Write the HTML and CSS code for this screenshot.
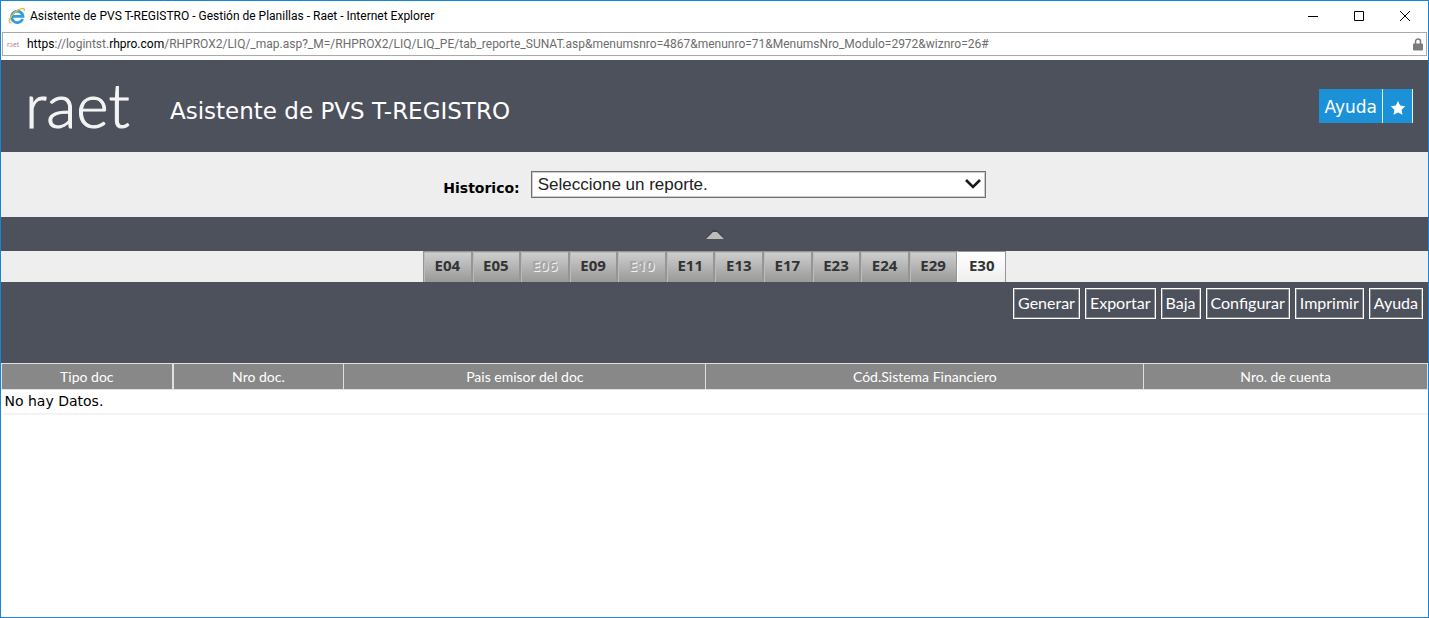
FILE: index.html
```html
<!DOCTYPE html>
<html lang="es">
<head>
<meta charset="utf-8">
<title>Asistente de PVS T-REGISTRO</title>
<link rel="stylesheet" href="styles.css">
</head>
<body>
<div class="window">
  <div class="titlebar">
    <svg class="ie-icon" viewBox="0 0 18 18" aria-hidden="true">
      <path d="M14.600 12A5.700 5.700 0 1 1 15 9.400H5" fill="none" stroke="#2f9fe0" stroke-width="2.800"/>
      <path d="M3.500 15.800C-.4 16.600 1.500 9.800 6.800 5.200 11.400 1.400 17.200-.2 16.400 4" fill="none" stroke="#f0b83c" stroke-width="1.400"/>
    </svg>
    <span class="window-title">Asistente de PVS T-REGISTRO - Gestión de Planillas - Raet - Internet Explorer</span>
    <div class="window-controls">
      <button type="button" class="window-button" aria-label="Minimizar"><svg viewBox="0 0 12 12"><path d="M1 6.500h10"/></svg></button>
      <button type="button" class="window-button" aria-label="Maximizar"><svg viewBox="0 0 12 12"><path d="M1.500 1.500h9v9h-9z"/></svg></button>
      <button type="button" class="window-button" aria-label="Cerrar"><svg viewBox="0 0 12 12"><path d="M1 1l10 10M11 1L1 11"/></svg></button>
    </div>
  </div>

  <div class="addressbar">
    <span class="favicon"><i>r</i><i>a</i><i>e</i><i>t</i></span>
    <span class="url"><b>https</b>://logintst.<b>rhpro.com</b>/RHPROX2/LIQ/_map.asp?_M=/RHPROX2/LIQ/LIQ_PE/tab_reporte_SUNAT.asp&amp;menumsnro=4867&amp;menunro=71&amp;MenumsNro_Modulo=2972&amp;wiznro=26#</span>
    <svg class="lock" viewBox="0 0 10 13" aria-hidden="true"><path d="M2.500 6V3.500a2.500 2.500 0 0 1 5 0V6" fill="none" stroke="#7b7b7b" stroke-width="1.500"/><rect y="5.500" width="10" height="7" rx="1" fill="#7b7b7b"/></svg>
  </div>

  <header class="header">
    <span class="logo">raet</span>
    <h1 class="page-title">Asistente de PVS T-REGISTRO</h1>
    <div class="header-actions">
      <button type="button" class="help-button">Ayuda</button>
      <button type="button" class="star-button" aria-label="Favorito"><svg viewBox="0 0 16 16"><path d="M8 1l2.200 4.600 5 .7-3.600 3.500.9 5L8 12.400l-4.500 2.400.9-5L.8 6.300l5-.7z" fill="#fff"/></svg></button>
    </div>
  </header>

  <div class="filter">
    <label class="filter-label" for="historico">Historico:</label>
    <div class="select-box">
      <select id="historico" class="select"><option>Seleccione un reporte.</option></select>
      <svg class="select-arrow" viewBox="0 0 16 10" aria-hidden="true"><path d="M1 1l7 7 7-7" fill="none" stroke="#1a1a1a" stroke-width="2.600"/></svg>
    </div>
  </div>

  <div class="collapse">
    <button type="button" class="collapse-button" aria-label="Contraer"><svg viewBox="0 0 20 10"><path d="M0 9L8 0h4l8 9z" fill="#3f434b"/><path d="M1 9l7-7h4l7 7z" fill="#bcbcbc"/></svg></button>
  </div>

  <nav class="tabs">
    <div class="tab-list">
      <button type="button" class="tab">E04</button>
      <button type="button" class="tab">E05</button>
      <button type="button" class="tab" disabled>E06</button>
      <button type="button" class="tab">E09</button>
      <button type="button" class="tab" disabled>E10</button>
      <button type="button" class="tab">E11</button>
      <button type="button" class="tab">E13</button>
      <button type="button" class="tab">E17</button>
      <button type="button" class="tab">E23</button>
      <button type="button" class="tab">E24</button>
      <button type="button" class="tab">E29</button>
      <button type="button" class="tab tab-active">E30</button>
    </div>
  </nav>

  <div class="toolbar">
    <button type="button" class="tool">Generar</button>
    <button type="button" class="tool">Exportar</button>
    <button type="button" class="tool">Baja</button>
    <button type="button" class="tool">Configurar</button>
    <button type="button" class="tool">Imprimir</button>
    <button type="button" class="tool">Ayuda</button>
  </div>

  <table class="grid">
    <colgroup><col class="col-tipo"><col class="col-nro"><col class="col-pais"><col class="col-sistema"><col class="col-cuenta"></colgroup>
    <thead><tr><th>Tipo doc</th><th>Nro doc.</th><th>Pais emisor del doc</th><th>Cód.Sistema Financiero</th><th>Nro. de cuenta</th></tr></thead>
    <tbody><tr><td colspan="5">No hay Datos.</td></tr></tbody>
  </table>
</div>
</body>
</html>
```
FILE: styles.css
```css
* { box-sizing: border-box; }
body { margin: 0; background: #fff; font-family: "DejaVu Sans", Verdana, sans-serif; }
button { margin: 0; padding: 0; border: 0; background: none; font: inherit; color: inherit; }
svg { display: block; }

.window { min-height: 100vh; border: 1px solid #1883d7; }

.titlebar { display: flex; align-items: center; height: 31px; padding: 0 0 2px 7px; }
.ie-icon { width: 18px; height: 18px; margin-right: 4px; }
.window-title { font: 12px/16px Roboto, "Segoe UI", sans-serif; color: #000; white-space: nowrap; }
.window-controls { display: flex; margin-left: auto; }
.window-button { display: grid; place-items: center; width: 46px; height: 28px; }
.window-button svg { width: 12px; height: 12px; fill: none; stroke: #000; stroke-width: 1; }

.addressbar { display: flex; align-items: center; height: 24px; margin: 0 1px 4px; padding: 0 3px 0 4px; border: 1px solid #aaa; }
.favicon { display: flex; width: 20px; font: 7px/10px Lato, sans-serif; color: #c97b86; }
.favicon i { font-style: normal; }
.favicon i:nth-child(2) { color: #d9a27a; }
.favicon i:nth-child(3) { color: #9b83bd; }
.url { font: 12px/16px Roboto, "Segoe UI", sans-serif; color: #6d6d6d; white-space: nowrap; }
.url b { font-weight: 400; color: #000; }
.lock { width: 10px; height: 13px; margin-left: auto; }

.header { display: flex; align-items: center; height: 92px; padding: 0 15px 0 24px; background: #4d515c; color: #fff; }
.logo { width: 145px; padding-bottom: 4px; font: 300 62px/62px Lato, sans-serif; color: #f4f4f5; -webkit-text-stroke: 1px #f4f4f5; }
.page-title { margin: 10px 0 0; font-size: 23px; line-height: 28px; font-weight: 400; }
.header-actions { display: flex; margin-left: auto; }
.help-button { height: 34px; padding: 2px 5px 0; background: #1b92d8; font-size: 17px; }
.star-button { display: grid; place-items: center; width: 31px; height: 34px; padding-top: 3px; border: solid #e4eef5; border-width: 0 1px; background: #1b92d8; }
.star-button svg { width: 16px; height: 16px; }

.filter { display: flex; justify-content: center; align-items: center; gap: 11px; height: 65px; background: #eee; }
.filter-label { padding-top: 6px; font-size: 14px; line-height: 20px; font-weight: 700; color: #000; }
.select-box { position: relative; width: 455px; }
.select { display: block; width: 100%; height: 27px; padding: 1px 30px 0 6px; border: 1px solid #707070; border-radius: 0; box-shadow: inset 0 0 0 1px #ccc; background: #fff; appearance: none; font: 17px/24px "Liberation Sans", Arial, sans-serif; color: #222; }
.select-arrow { position: absolute; right: 5px; top: 8px; width: 16px; height: 10px; }

.collapse { display: flex; justify-content: center; align-items: flex-end; height: 34px; padding-bottom: 11px; background: #4d515c; }
.collapse-button svg { width: 20px; height: 10px; }

.tabs { height: 31px; background: #eee; }
.tab-list { display: grid; grid-template-columns: repeat(12, 1fr); width: 583px; max-width: 100%; height: 100%; margin: 0 auto; }
.tab { padding-bottom: 4px; border: solid #959595; border-width: 1px 1px 0; background: linear-gradient(#cfcfcf, #999); box-shadow: inset 1px 1px #bbb; font: 700 15px/20px "Noto Sans", sans-serif; color: #333; }
.tab:disabled { color: #a5a5a5; text-shadow: 1px 1px #f2f2f2; }
.tab-active { background: linear-gradient(#fff, #eee); box-shadow: none; border-left-color: #fff; }

.toolbar { display: flex; justify-content: flex-end; align-items: flex-start; gap: 5px; height: 81px; padding: 6px 5px; background: #4d515c; color: #fff; font: 16px/20px Lato, Calibri, sans-serif; }
.tool { height: 31px; padding: 0 4px 2px; border: 1px solid #fff; box-shadow: inset 0 0 0 1px #85888f; }

.grid { width: 100%; table-layout: fixed; border-collapse: collapse; }
.col-tipo, .col-nro { width: 12%; }
.col-pais { width: 25.4%; }
.col-sistema { width: 30.7%; }
.grid th { height: 26px; padding: 0; border: 1px solid #e0e0e0; background: #888; color: #fff; font: 400 14px/20px Lato, Calibri, sans-serif; }
.grid th:first-child { border-right-width: 2px; }
.grid td { height: 24px; padding: 0 3px; border-bottom: 2px solid #f3f3f3; font-size: 14px; line-height: 20px; color: #000; }
```
